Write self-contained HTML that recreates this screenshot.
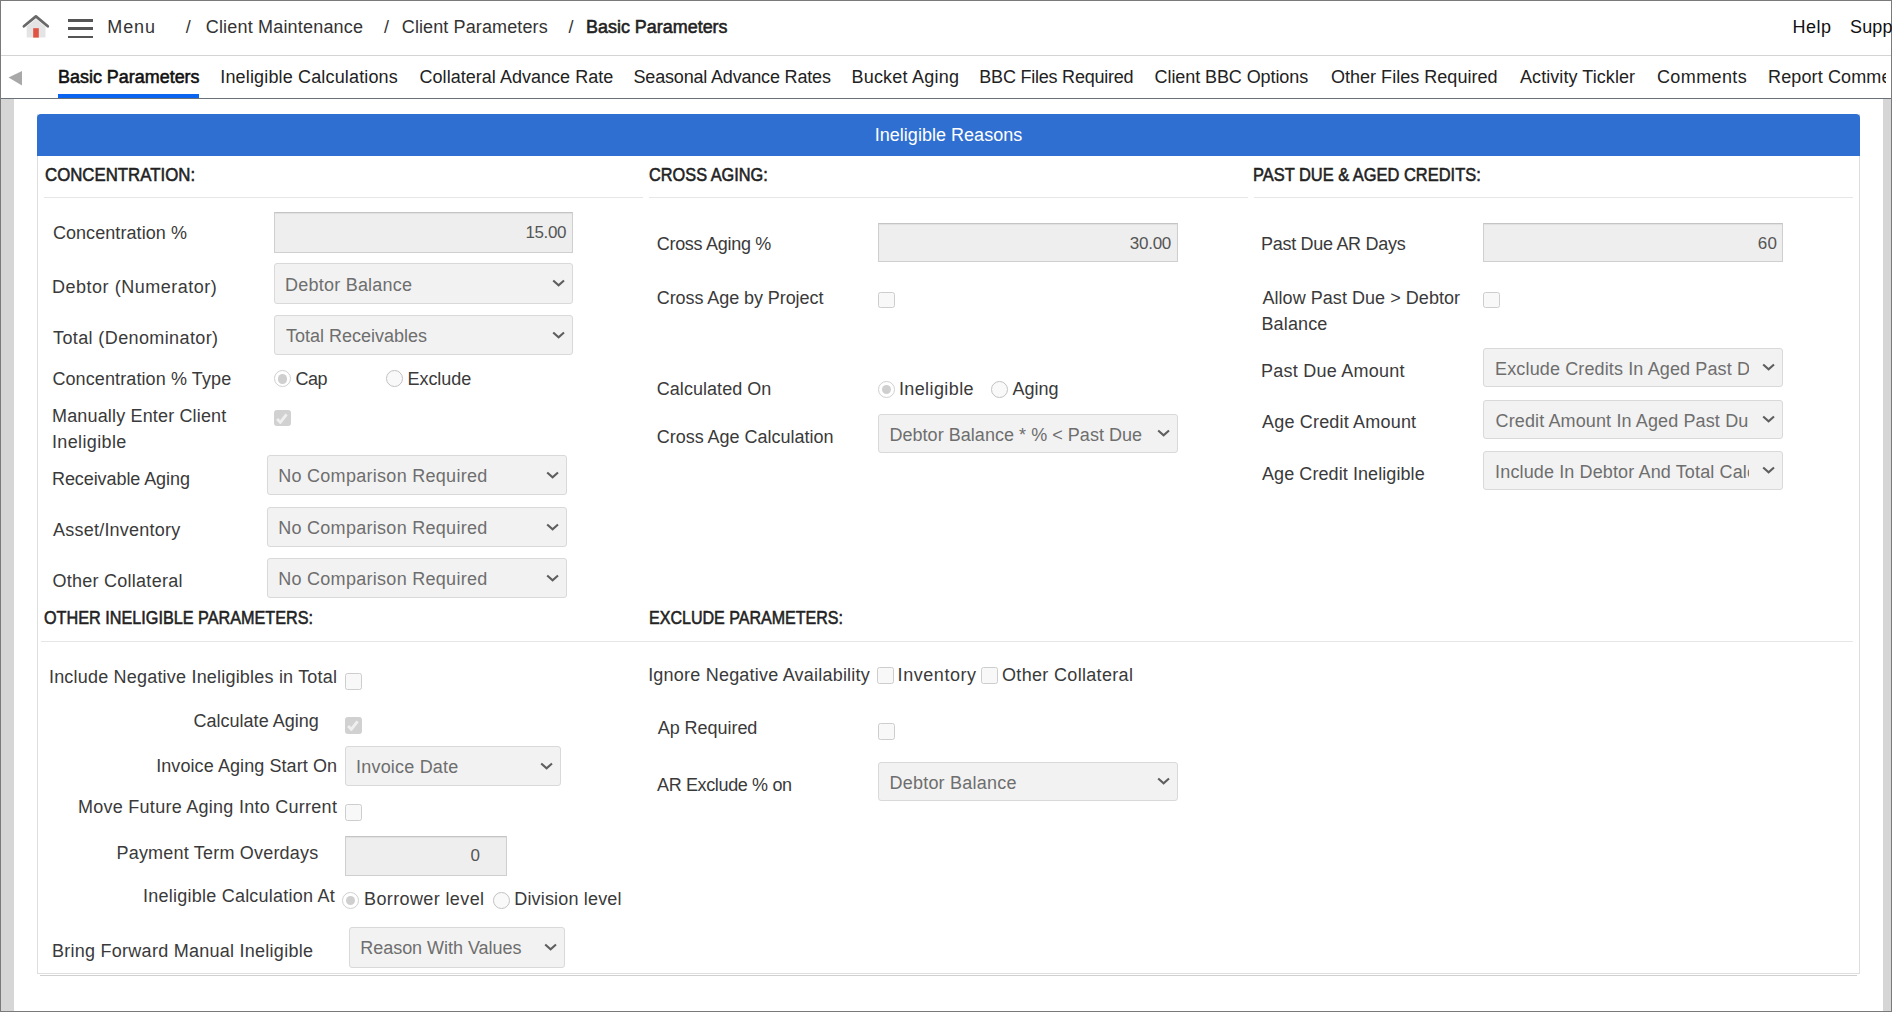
<!DOCTYPE html>
<html><head><meta charset="utf-8"><title>Basic Parameters</title>
<style>
html,body{margin:0;padding:0;width:1892px;height:1012px;overflow:hidden;background:#fff;}
body{position:relative;font-family:"Liberation Sans",sans-serif;font-size:18px;}
.a{position:absolute;}
.t{position:absolute;white-space:nowrap;line-height:20px;font-size:18px;}
.b{-webkit-text-stroke:0.55px currentColor;}
.inp{position:absolute;box-sizing:border-box;background:#eeeeee;border:1px solid #cfcfcf;border-top-color:#c4c4c4;box-shadow:inset 0 1px 1px rgba(0,0,0,0.06);}
.sel{position:absolute;box-sizing:border-box;background:#f2f2f2;border:1px solid #d9d9d9;border-radius:3px;}
.chev{position:absolute;width:14px;height:9px;}
.cb{position:absolute;box-sizing:border-box;width:16.5px;height:16.5px;border:1px solid #cdcdcd;border-radius:2.5px;background:#f8f8f8;}
.cb.on{background:#d1d1d1;border-color:#d1d1d1;}
.rd{position:absolute;box-sizing:border-box;width:16.8px;height:16.8px;border:1px solid #c2c2c2;border-radius:50%;background:#f9f9f9;}
.rd.on{background:#fff;border-color:#d0d0d0;}
.rd.on::after{content:"";position:absolute;left:2.6px;top:2.9px;width:9.6px;height:9.6px;border-radius:50%;background:#cfcfcf;}
</style></head><body>

<div class="a" style="left:0;top:0;width:1892px;height:1px;background:#7a7a7a"></div>
<div class="a" style="left:0;top:0;width:1px;height:1012px;background:#7a7a7a"></div>
<div class="a" style="left:1891px;top:0;width:1px;height:1012px;background:#7a7a7a"></div>
<div class="a" style="left:0;top:1011px;width:1892px;height:1px;background:#7a7a7a"></div>
<div class="a" style="left:1px;top:55px;width:1890px;height:1px;background:#d4d4d4"></div>
<div class="a" style="left:1px;top:98px;width:1890px;height:1px;background:#6a7179"></div>
<div class="a" style="left:1px;top:99px;width:13px;height:912px;background:#d6d6d6"></div>
<div class="a" style="left:1883px;top:99px;width:8px;height:912px;background:#d6d6d6"></div>
<svg class="a" style="left:15px;top:8px" width="45" height="40" viewBox="0 0 45 40">
<path d="M11.7 18.6 L20.9 11 L30.5 18.6 L30.5 29.6 L11.7 29.6 Z" fill="#e4e4e4"/>
<rect x="18.2" y="20.2" width="5.6" height="9.4" fill="#e05241"/>
<path d="M8.9 18.3 L20.9 8.4 L32.8 18.3" fill="none" stroke="#686868" stroke-width="2.7" stroke-linecap="round" stroke-linejoin="round"/>
</svg>
<div class="a" style="left:68px;top:19px;width:25px;height:3px;background:#555"></div>
<div class="a" style="left:68px;top:27px;width:25px;height:3px;background:#555"></div>
<div class="a" style="left:68px;top:36px;width:25px;height:2px;background:#555"></div>
<svg class="a" style="left:8px;top:70px" width="16" height="16" viewBox="0 0 16 16"><path d="M0.5 7.6 L14 1 L14 15.4 Z" fill="#a8a8a8"/></svg>
<div class="a" style="left:58px;top:94px;width:141px;height:4px;background:#0a64f0"></div>
<div class="a" style="left:40px;top:975px;width:1817px;height:1px;background:#d0d0d0"></div>
<div class="a" style="left:37px;top:114px;width:1823px;height:860px;box-sizing:border-box;border:1px solid #dedede;border-top:none;background:#fff"></div>
<div class="a" style="left:37px;top:114px;width:1823px;height:42px;background:#2f6fd1;border-radius:4px 4px 0 0"></div>
<div class="a" style="left:44px;top:197px;width:599px;height:1px;background:#e6e6e6"></div>
<div class="a" style="left:649px;top:197px;width:599px;height:1px;background:#e6e6e6"></div>
<div class="a" style="left:1254px;top:197px;width:599px;height:1px;background:#e6e6e6"></div>
<div class="a" style="left:41px;top:641px;width:1812px;height:1px;background:#e6e6e6"></div>
<div class="t" id="t0" style="left:107.28px;top:16.90px;color:#333;letter-spacing:0.867px;">Menu</div>
<div class="t" id="t1" style="left:185.84px;top:16.90px;color:#333;letter-spacing:0.129px;">/</div>
<div class="t" id="t2" style="left:205.72px;top:16.90px;color:#333;letter-spacing:0.188px;">Client Maintenance</div>
<div class="t" id="t3" style="left:384.00px;top:16.90px;color:#333;letter-spacing:0.129px;">/</div>
<div class="t" id="t4" style="left:401.78px;top:16.90px;color:#333;letter-spacing:0.113px;">Client Parameters</div>
<div class="t" id="t5" style="left:568.50px;top:16.90px;color:#333;letter-spacing:0.129px;">/</div>
<div class="t b" id="t6" style="left:585.80px;top:16.90px;color:#222;transform:scaleX(0.9965);transform-origin:0 0;">Basic Parameters</div>
<div class="t" id="t7" style="left:1792.62px;top:16.90px;color:#111;letter-spacing:0.467px;">Help</div>
<div class="t" id="t8" style="left:1850.00px;top:16.90px;color:#111;letter-spacing:0.129px;">Support</div>
<div class="t b" id="t9" style="left:57.60px;top:67.40px;color:#111;transform:scaleX(0.9965);transform-origin:0 0;">Basic Parameters</div>
<div class="t" id="t10" style="left:220.28px;top:67.40px;color:#222;letter-spacing:0.155px;">Ineligible Calculations</div>
<div class="t" id="t11" style="left:419.56px;top:67.40px;color:#222;letter-spacing:0.027px;">Collateral Advance Rate</div>
<div class="t" id="t12" style="left:633.56px;top:67.40px;color:#222;letter-spacing:-0.181px;">Seasonal Advance Rates</div>
<div class="t" id="t13" style="left:851.46px;top:67.40px;color:#222;letter-spacing:0.218px;">Bucket Aging</div>
<div class="t" id="t14" style="left:979.34px;top:67.40px;color:#222;letter-spacing:-0.224px;">BBC Files Required</div>
<div class="t" id="t15" style="left:1154.56px;top:67.40px;color:#222;letter-spacing:-0.082px;">Client BBC Options</div>
<div class="t" id="t16" style="left:1330.90px;top:67.40px;color:#222;letter-spacing:0.032px;">Other Files Required</div>
<div class="t" id="t17" style="left:1520.00px;top:67.40px;color:#222;letter-spacing:0.067px;">Activity Tickler</div>
<div class="t" id="t18" style="left:1656.94px;top:67.40px;color:#222;letter-spacing:0.400px;">Comments</div>
<div class="t" id="t19" style="left:1768.00px;top:67.40px;color:#222;letter-spacing:0.129px;width:118.00px;overflow:hidden;">Report Comments</div>
<div class="t" id="t20" style="left:874.72px;top:124.90px;color:#fff;letter-spacing:0.024px;">Ineligible Reasons</div>
<div class="t b" id="t21" style="left:44.60px;top:165.20px;color:#222;transform:scaleX(0.9340);transform-origin:0 0;">CONCENTRATION:</div>
<div class="t b" id="t22" style="left:649.20px;top:165.20px;color:#222;transform:scaleX(0.9071);transform-origin:0 0;">CROSS AGING:</div>
<div class="t b" id="t23" style="left:1253.00px;top:165.20px;color:#222;transform:scaleX(0.9130);transform-origin:0 0;">PAST DUE &amp; AGED CREDITS:</div>
<div class="t b" id="t24" style="left:44.40px;top:607.60px;color:#222;transform:scaleX(0.9007);transform-origin:0 0;">OTHER INELIGIBLE PARAMETERS:</div>
<div class="t b" id="t25" style="left:648.60px;top:607.60px;color:#222;transform:scaleX(0.8912);transform-origin:0 0;">EXCLUDE PARAMETERS:</div>
<div class="t" id="t26" style="left:52.90px;top:223.20px;color:#3a3a3a;letter-spacing:0.071px;">Concentration %</div>
<div class="t" id="t27" style="left:52.00px;top:277.20px;color:#3a3a3a;letter-spacing:0.518px;">Debtor (Numerator)</div>
<div class="t" id="t28" style="left:53.00px;top:328.20px;color:#3a3a3a;letter-spacing:0.389px;">Total (Denominator)</div>
<div class="t" id="t29" style="left:52.40px;top:369.00px;color:#3a3a3a;letter-spacing:0.105px;">Concentration % Type</div>
<div class="t" id="t30" style="left:52.00px;top:406.00px;color:#3a3a3a;letter-spacing:0.160px;">Manually Enter Client</div>
<div class="t" id="t31" style="left:52.00px;top:432.00px;color:#3a3a3a;letter-spacing:0.356px;">Ineligible</div>
<div class="t" id="t32" style="left:52.00px;top:469.00px;color:#3a3a3a;letter-spacing:-0.080px;">Receivable Aging</div>
<div class="t" id="t33" style="left:53.00px;top:520.00px;color:#3a3a3a;letter-spacing:0.229px;">Asset/Inventory</div>
<div class="t" id="t34" style="left:52.40px;top:571.00px;color:#3a3a3a;letter-spacing:0.267px;">Other Collateral</div>
<div class="t" id="t35" style="left:295.40px;top:369.00px;color:#3a3a3a;letter-spacing:-0.400px;">Cap</div>
<div class="t" id="t36" style="left:407.46px;top:369.00px;color:#3a3a3a;letter-spacing:-0.033px;">Exclude</div>
<div class="t" id="t37" style="left:656.72px;top:234.00px;color:#3a3a3a;letter-spacing:-0.283px;">Cross Aging %</div>
<div class="t" id="t38" style="left:656.72px;top:288.00px;color:#3a3a3a;letter-spacing:-0.074px;">Cross Age by Project</div>
<div class="t" id="t39" style="left:656.72px;top:379.00px;color:#3a3a3a;letter-spacing:0.050px;">Calculated On</div>
<div class="t" id="t40" style="left:898.90px;top:379.00px;color:#3a3a3a;letter-spacing:0.400px;">Ineligible</div>
<div class="t" id="t41" style="left:1012.62px;top:379.00px;color:#3a3a3a;letter-spacing:-0.050px;">Aging</div>
<div class="t" id="t42" style="left:656.72px;top:426.60px;color:#3a3a3a;letter-spacing:-0.020px;">Cross Age Calculation</div>
<div class="t" id="t43" style="left:1261.00px;top:234.30px;color:#3a3a3a;letter-spacing:-0.293px;">Past Due AR Days</div>
<div class="t" id="t44" style="left:1262.48px;top:288.00px;color:#3a3a3a;letter-spacing:0.045px;">Allow Past Due &gt; Debtor</div>
<div class="t" id="t45" style="left:1261.48px;top:314.00px;color:#3a3a3a;letter-spacing:0.133px;">Balance</div>
<div class="t" id="t46" style="left:1261.00px;top:361.00px;color:#3a3a3a;letter-spacing:0.243px;">Past Due Amount</div>
<div class="t" id="t47" style="left:1262.00px;top:412.20px;color:#3a3a3a;letter-spacing:0.188px;">Age Credit Amount</div>
<div class="t" id="t48" style="left:1262.00px;top:464.10px;color:#3a3a3a;letter-spacing:0.080px;">Age Credit Ineligible</div>
<div class="t" id="t49" style="left:48.94px;top:667.00px;color:#3a3a3a;letter-spacing:0.200px;">Include Negative Ineligibles in Total</div>
<div class="t" id="t50" style="left:193.40px;top:711.20px;color:#3a3a3a;letter-spacing:0.029px;">Calculate Aging</div>
<div class="t" id="t51" style="left:156.16px;top:756.00px;color:#3a3a3a;letter-spacing:0.086px;">Invoice Aging Start On</div>
<div class="t" id="t52" style="left:77.96px;top:796.80px;color:#3a3a3a;letter-spacing:0.269px;">Move Future Aging Into Current</div>
<div class="t" id="t53" style="left:116.50px;top:842.70px;color:#3a3a3a;letter-spacing:0.200px;">Payment Term Overdays</div>
<div class="t" id="t54" style="left:143.06px;top:886.30px;color:#3a3a3a;letter-spacing:0.233px;">Ineligible Calculation At</div>
<div class="t" id="t55" style="left:364.00px;top:889.20px;color:#3a3a3a;letter-spacing:0.385px;">Borrower level</div>
<div class="t" id="t56" style="left:514.28px;top:889.20px;color:#3a3a3a;letter-spacing:0.169px;">Division level</div>
<div class="t" id="t57" style="left:52.00px;top:941.00px;color:#3a3a3a;letter-spacing:0.260px;">Bring Forward Manual Ineligible</div>
<div class="t" id="t58" style="left:648.16px;top:665.00px;color:#3a3a3a;letter-spacing:0.215px;">Ignore Negative Availability</div>
<div class="t" id="t59" style="left:897.62px;top:665.00px;color:#3a3a3a;letter-spacing:0.550px;">Inventory</div>
<div class="t" id="t60" style="left:1002.06px;top:665.00px;color:#3a3a3a;letter-spacing:0.320px;">Other Collateral</div>
<div class="t" id="t61" style="left:657.72px;top:718.40px;color:#3a3a3a;letter-spacing:-0.040px;">Ap Required</div>
<div class="t" id="t62" style="left:657.00px;top:774.70px;color:#3a3a3a;letter-spacing:-0.357px;">AR Exclude % on</div>
<div class="inp" style="left:274px;top:212px;width:299px;height:41px"></div>
<div class="t" id="i0" style="right:1326.00px;top:223.30px;font-size:17px;color:#555;letter-spacing:-0.400px;">15.00</div>
<div class="inp" style="left:878px;top:223px;width:300px;height:39px"></div>
<div class="t" id="i1" style="right:720.96px;top:234.30px;font-size:17px;color:#555;letter-spacing:-0.250px;">30.00</div>
<div class="inp" style="left:1483px;top:223px;width:300px;height:39px"></div>
<div class="t" id="i2" style="right:114.96px;top:234.30px;font-size:17px;color:#555;letter-spacing:0.200px;">60</div>
<div class="inp" style="left:345px;top:836px;width:162px;height:40px"></div>
<div class="t" id="i3" style="right:1411.94px;top:846.00px;font-size:17px;color:#555;">0</div>
<div class="sel" style="left:274px;top:263px;width:299px;height:41px"></div>
<div class="t" id="s0" style="left:285.00px;top:275.00px;color:#6e6e6e;letter-spacing:0.231px;">Debtor Balance</div>
<svg class="chev" style="left:551.6px;top:279.1px" width="14" height="9" viewBox="0 0 14 9"><path d="M1.2 1.5 L6.6 6.3 L12 1.5" fill="none" stroke="#5e5e5e" stroke-width="2.1"/></svg>
<div class="sel" style="left:274px;top:315px;width:299px;height:40px"></div>
<div class="t" id="s1" style="left:286.00px;top:326.00px;color:#6e6e6e;">Total Receivables</div>
<svg class="chev" style="left:551.6px;top:330.6px" width="14" height="9" viewBox="0 0 14 9"><path d="M1.2 1.5 L6.6 6.3 L12 1.5" fill="none" stroke="#5e5e5e" stroke-width="2.1"/></svg>
<div class="sel" style="left:267px;top:455px;width:300px;height:40px"></div>
<div class="t" id="s2" style="left:278.16px;top:466.00px;color:#6e6e6e;letter-spacing:0.286px;">No Comparison Required</div>
<svg class="chev" style="left:545.6px;top:470.6px" width="14" height="9" viewBox="0 0 14 9"><path d="M1.2 1.5 L6.6 6.3 L12 1.5" fill="none" stroke="#5e5e5e" stroke-width="2.1"/></svg>
<div class="sel" style="left:267px;top:507px;width:300px;height:40px"></div>
<div class="t" id="s3" style="left:278.16px;top:517.50px;color:#6e6e6e;letter-spacing:0.286px;">No Comparison Required</div>
<svg class="chev" style="left:545.6px;top:522.6px" width="14" height="9" viewBox="0 0 14 9"><path d="M1.2 1.5 L6.6 6.3 L12 1.5" fill="none" stroke="#5e5e5e" stroke-width="2.1"/></svg>
<div class="sel" style="left:267px;top:558px;width:300px;height:40px"></div>
<div class="t" id="s4" style="left:278.16px;top:569.00px;color:#6e6e6e;letter-spacing:0.286px;">No Comparison Required</div>
<svg class="chev" style="left:545.6px;top:573.6px" width="14" height="9" viewBox="0 0 14 9"><path d="M1.2 1.5 L6.6 6.3 L12 1.5" fill="none" stroke="#5e5e5e" stroke-width="2.1"/></svg>
<div class="sel" style="left:878px;top:414px;width:300px;height:39px"></div>
<div class="t" id="s5" style="left:889.44px;top:425.00px;color:#6e6e6e;letter-spacing:0.036px;">Debtor Balance * % &lt; Past Due</div>
<svg class="chev" style="left:1156.6px;top:429.1px" width="14" height="9" viewBox="0 0 14 9"><path d="M1.2 1.5 L6.6 6.3 L12 1.5" fill="none" stroke="#5e5e5e" stroke-width="2.1"/></svg>
<div class="sel" style="left:1483px;top:348px;width:300px;height:39px"></div>
<div class="t" id="s6" style="left:1495.12px;top:358.80px;color:#6e6e6e;letter-spacing:0.129px;width:254.28px;overflow:hidden;">Exclude Credits In Aged Past Due</div>
<svg class="chev" style="left:1761.6px;top:363.1px" width="14" height="9" viewBox="0 0 14 9"><path d="M1.2 1.5 L6.6 6.3 L12 1.5" fill="none" stroke="#5e5e5e" stroke-width="2.1"/></svg>
<div class="sel" style="left:1483px;top:400px;width:300px;height:39px"></div>
<div class="t" id="s7" style="left:1495.52px;top:410.50px;color:#6e6e6e;letter-spacing:0.129px;width:253.88px;overflow:hidden;">Credit Amount In Aged Past Due</div>
<svg class="chev" style="left:1761.6px;top:415.1px" width="14" height="9" viewBox="0 0 14 9"><path d="M1.2 1.5 L6.6 6.3 L12 1.5" fill="none" stroke="#5e5e5e" stroke-width="2.1"/></svg>
<div class="sel" style="left:1483px;top:451px;width:300px;height:39px"></div>
<div class="t" id="s8" style="left:1495.12px;top:462.00px;color:#6e6e6e;letter-spacing:0.129px;width:254.28px;overflow:hidden;">Include In Debtor And Total Calculation</div>
<svg class="chev" style="left:1761.6px;top:466.1px" width="14" height="9" viewBox="0 0 14 9"><path d="M1.2 1.5 L6.6 6.3 L12 1.5" fill="none" stroke="#5e5e5e" stroke-width="2.1"/></svg>
<div class="sel" style="left:345px;top:746px;width:216px;height:40px"></div>
<div class="t" id="s9" style="left:356.02px;top:757.00px;color:#6e6e6e;letter-spacing:0.200px;">Invoice Date</div>
<svg class="chev" style="left:539.6px;top:761.6px" width="14" height="9" viewBox="0 0 14 9"><path d="M1.2 1.5 L6.6 6.3 L12 1.5" fill="none" stroke="#5e5e5e" stroke-width="2.1"/></svg>
<div class="sel" style="left:878px;top:762px;width:300px;height:39px"></div>
<div class="t" id="s10" style="left:889.44px;top:773.00px;color:#6e6e6e;letter-spacing:0.231px;">Debtor Balance</div>
<svg class="chev" style="left:1156.6px;top:777.1px" width="14" height="9" viewBox="0 0 14 9"><path d="M1.2 1.5 L6.6 6.3 L12 1.5" fill="none" stroke="#5e5e5e" stroke-width="2.1"/></svg>
<div class="sel" style="left:349px;top:927px;width:216px;height:41px"></div>
<div class="t" id="s11" style="left:360.28px;top:937.70px;color:#6e6e6e;letter-spacing:-0.035px;">Reason With Values</div>
<svg class="chev" style="left:543.6px;top:943.1px" width="14" height="9" viewBox="0 0 14 9"><path d="M1.2 1.5 L6.6 6.3 L12 1.5" fill="none" stroke="#5e5e5e" stroke-width="2.1"/></svg>
<div class="cb on" style="left:274px;top:409.5px"><svg class="a" style="left:1px;top:2px" width="13" height="11" viewBox="0 0 13 11"><path d="M1.1 6 L4.3 9.3 L10.6 1.3" fill="none" stroke="#efefef" stroke-width="2.9"/></svg></div>
<div class="cb" style="left:878px;top:291.7px"></div>
<div class="cb" style="left:1483px;top:291.7px"></div>
<div class="cb" style="left:345.4px;top:673.1px"></div>
<div class="cb on" style="left:345.4px;top:717px"><svg class="a" style="left:1px;top:2px" width="13" height="11" viewBox="0 0 13 11"><path d="M1.1 6 L4.3 9.3 L10.6 1.3" fill="none" stroke="#efefef" stroke-width="2.9"/></svg></div>
<div class="cb" style="left:345px;top:804px"></div>
<div class="cb" style="left:877.1px;top:667.2px"></div>
<div class="cb" style="left:981.0px;top:667.2px"></div>
<div class="cb" style="left:878px;top:723px"></div>
<div class="rd on" style="left:274.2px;top:370.2px"></div>
<div class="rd" style="left:386px;top:370.2px"></div>
<div class="rd on" style="left:878px;top:381px"></div>
<div class="rd" style="left:991px;top:381px"></div>
<div class="rd on" style="left:342px;top:892px"></div>
<div class="rd" style="left:493px;top:892px"></div>
</body></html>
